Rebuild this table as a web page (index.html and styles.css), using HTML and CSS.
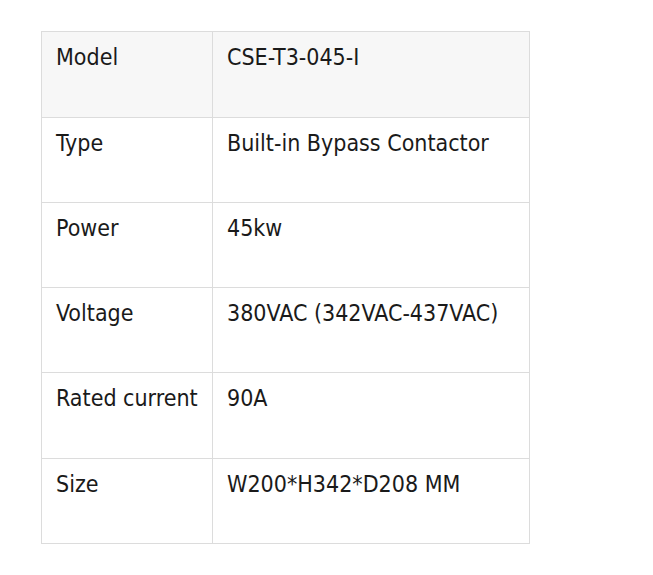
FILE: index.html
```html
<!DOCTYPE html>
<html lang="en">
<head>
  <meta charset="UTF-8" />
  <meta name="viewport" content="width=device-width, initial-scale=1.0"/>
  <title>Specifications</title>
  <link rel="stylesheet" href="styles.css">
</head>
<body>
  <div class="page">
    <table class="specs">
      <tr class="head tall">
        <td class="label">Model</td>
        <td>CSE-T3-045-I</td>
      </tr>
      <tr>
        <td class="label">Type</td>
        <td>Built-in Bypass Contactor</td>
      </tr>
      <tr>
        <td class="label">Power</td>
        <td>45kw</td>
      </tr>
      <tr>
        <td class="label">Voltage</td>
        <td>380VAC (342VAC-437VAC)</td>
      </tr>
      <tr class="tall">
        <td class="label">Rated current</td>
        <td>90A</td>
      </tr>
      <tr>
        <td class="label">Size</td>
        <td>W200*H342*D208 MM</td>
      </tr>
    </table>
  </div>
</body>
</html>
```

FILE: styles.css
```css
body {
  margin: 0;
  background: #ffffff;
  color: #1a1a1a;
  font-family: 'DejaVu Sans Condensed', 'DejaVu Sans', sans-serif;
}

.page {
  padding: 31px 0 0 41px;
}

.specs {
  border-collapse: collapse;
  table-layout: fixed;
  width: 489px;
  font-size: 23px;
  line-height: 1.5;
}

.specs td {
  border: 1px solid #dcdcdc;
  height: 85px;
  padding: 8px 14px 10px 14px;
  vertical-align: top;
  box-sizing: border-box;
}

.specs tr.tall td {
  height: 86px;
}

.specs td.label {
  width: 171px;
}

.head td {
  background: #f7f7f7;
}
```
